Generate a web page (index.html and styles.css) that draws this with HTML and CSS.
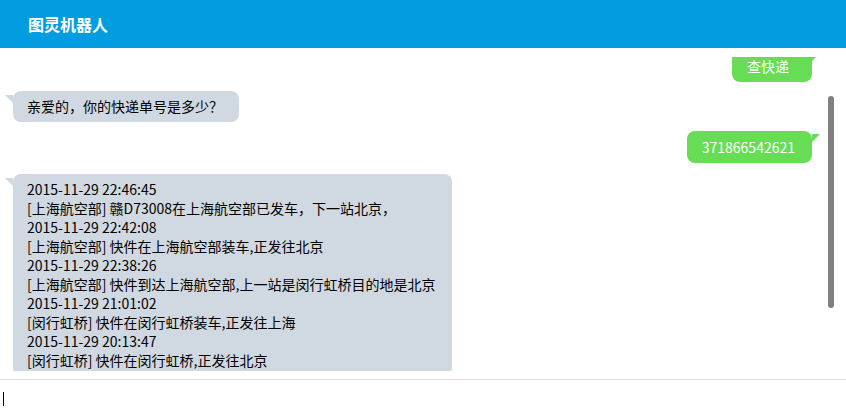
FILE: index.html
```html
<!DOCTYPE html>
<html lang="zh-CN">
<head>
<meta charset="utf-8">
<title>图灵机器人</title>
<link rel="stylesheet" href="styles.css">
</head>
<body>
<header class="header">图灵机器人</header>
<main class="chat">
  <div class="messages">
    <div class="row me"><div class="bubble green short">查快递</div></div>
    <div class="row bot"><div class="bubble gray">亲爱的，你的快递单号是多少？</div></div>
    <div class="row me"><div class="bubble green">371866542621</div></div>
    <div class="row bot late"><div class="bubble gray">2015-11-29 22:46:45<br>[上海航空部] 赣D73008在上海航空部已发车，下一站北京，<br>2015-11-29 22:42:08<br>[上海航空部] 快件在上海航空部装车,正发往北京<br>2015-11-29 22:38:26<br>[上海航空部] 快件到达上海航空部,上一站是闵行虹桥目的地是北京<br>2015-11-29 21:01:02<br>[闵行虹桥] 快件在闵行虹桥装车,正发往上海<br>2015-11-29 20:13:47<br>[闵行虹桥] 快件在闵行虹桥,正发往北京</div></div>
  </div>
  <div class="thumb"></div>
</main>
<footer class="input"><span class="caret"></span></footer>
</body>
</html>
```
FILE: styles.css
```css
html, body {
  margin: 0;
  padding: 0;
  background: #fff;
  font-family: "Noto Sans CJK SC", "Microsoft YaHei", sans-serif;
  overflow: hidden;
}
.header {
  height: 48px;
  background: #029ce0;
  color: #fff;
  font-size: 16px;
  font-weight: bold;
  display: flex;
  align-items: center;
  padding-left: 28px;
  box-sizing: border-box;
}
.chat {
  position: relative;
  margin: 9px 0 8px;
  height: 314px;
  overflow: hidden;
}
.messages {
  margin-top: -7px;
  display: flex;
  flex-direction: column;
  gap: 9px;
}
.row {
  display: flex;
}
.row.me {
  justify-content: flex-end;
  padding-right: 34px;
}
.row.bot {
  padding-left: 13px;
}
.row.late {
  margin-top: 2px;
}
.bubble {
  position: relative;
  border-radius: 8px;
  padding: 6px 16px 6px 14px;
  font-size: 14px;
  line-height: 19px;
  white-space: nowrap;
}
.bubble.gray {
  background: #d0d8e1;
  color: #000;
}
.bubble.green {
  background: #66dd55;
  color: #fff;
  padding: 7px 17px 6px 15px;
}
.bubble.green.short {
  padding-right: 23px;
}
.bubble.gray::before {
  content: "";
  position: absolute;
  left: -8px;
  top: 4px;
  border-top: 8px solid #d0d8e1;
  border-left: 8px solid transparent;
}
.bubble.green::after {
  content: "";
  position: absolute;
  right: -8px;
  top: 3px;
  border-top: 8px solid #66dd55;
  border-right: 8px solid transparent;
}
.thumb {
  position: absolute;
  right: 12px;
  top: 39px;
  width: 6px;
  height: 212px;
  border-radius: 3px;
  background: #808080;
}
.input {
  border-top: 1px solid #dde1e5;
  height: 36px;
  padding: 12px 0 0 3px;
  box-sizing: border-box;
}
.caret {
  display: block;
  width: 1px;
  height: 14px;
  background: #000;
}
```
